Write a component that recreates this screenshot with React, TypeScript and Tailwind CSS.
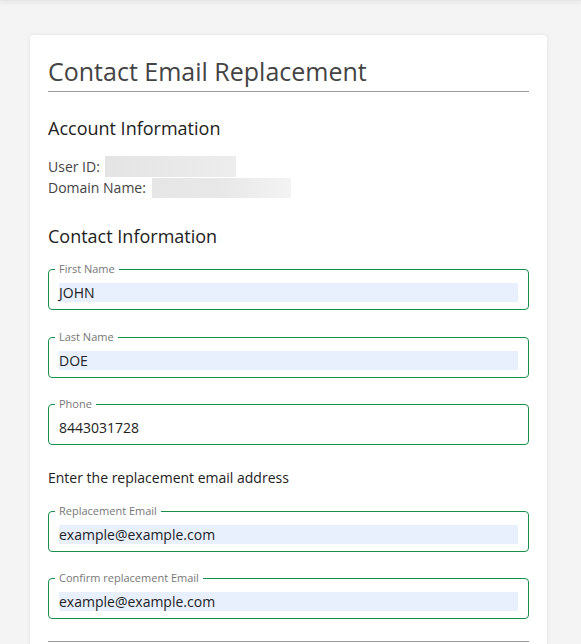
import React from 'react';

interface FieldProps {
  label: string;
  value: string;
  autofill?: boolean;
  className?: string;
}

const Field: React.FC<FieldProps> = ({ label, value, autofill, className }) => (
  <fieldset className={`rounded-[4px] border border-[#16904a] px-[10px] pt-[7px] pb-[7px] ${className ?? ''}`}>
    <legend className="ml-[-4px] px-[4px] text-[11px] leading-[14px] text-[#777]">{label}</legend>
    <div
      className={`flex h-[19px] items-center text-[14px] leading-[19px] text-[#222] ${
        autofill ? 'bg-[#e8f0fe]' : ''
      }`}
    >
      {value}
    </div>
  </fieldset>
);

export default function App() {
  return (
    <div className="min-h-screen bg-[#f4f4f4] font-['Open_Sans',sans-serif]">
      <div className="h-px bg-[#e6e6e6] shadow-[0_1px_4px_rgba(0,0,0,0.18)]" />
      <div className="ml-[30px] mt-[34px] w-[517px] rounded-[4px] bg-white px-[18px] pt-[20px] pb-[30px] shadow-[0_0_4px_rgba(0,0,0,0.08)]">
        <h1 className="border-b border-[#9a9a9a] pb-[4px] text-[25px] leading-[32px] font-normal text-[#444]">
          Contact Email Replacement
        </h1>

        <h2 className="mt-[24px] text-[18px] leading-[24px] text-[#222]">Account Information</h2>
        <div className="mt-[16px] text-[14px] leading-[21px] text-[#444]">
          <div className="flex items-center">
            <span>User ID:</span>
            <span className="ml-[5px] h-[21px] w-[131px] bg-gradient-to-r from-[#e4e4e4] to-[#ededed]" />
          </div>
          <div className="flex items-center">
            <span>Domain Name:</span>
            <span className="ml-[6px] h-[20px] w-[139px] bg-gradient-to-r from-[#e6e6e6] via-[#e8e8e8] to-[#f3f3f3]" />
          </div>
        </div>

        <h2 className="mt-[26px] text-[18px] leading-[24px] text-[#222]">Contact Information</h2>
        <Field className="mt-[14px]" label="First Name" value="JOHN" autofill />
        <Field className="mt-[20px]" label="Last Name" value="DOE" autofill />
        <Field className="mt-[19px]" label="Phone" value="8443031728" />

        <p className="mt-[22px] text-[14px] leading-[21px] text-[#222]">Enter the replacement email address</p>

        <Field className="mt-[16px]" label="Replacement Email" value="example@example.com" autofill />
        <Field className="mt-[19px]" label="Confirm replacement Email" value="example@example.com" autofill />

        <hr className="mt-[22px] border-t border-[#9a9a9a]" />
      </div>
    </div>
  );
}
